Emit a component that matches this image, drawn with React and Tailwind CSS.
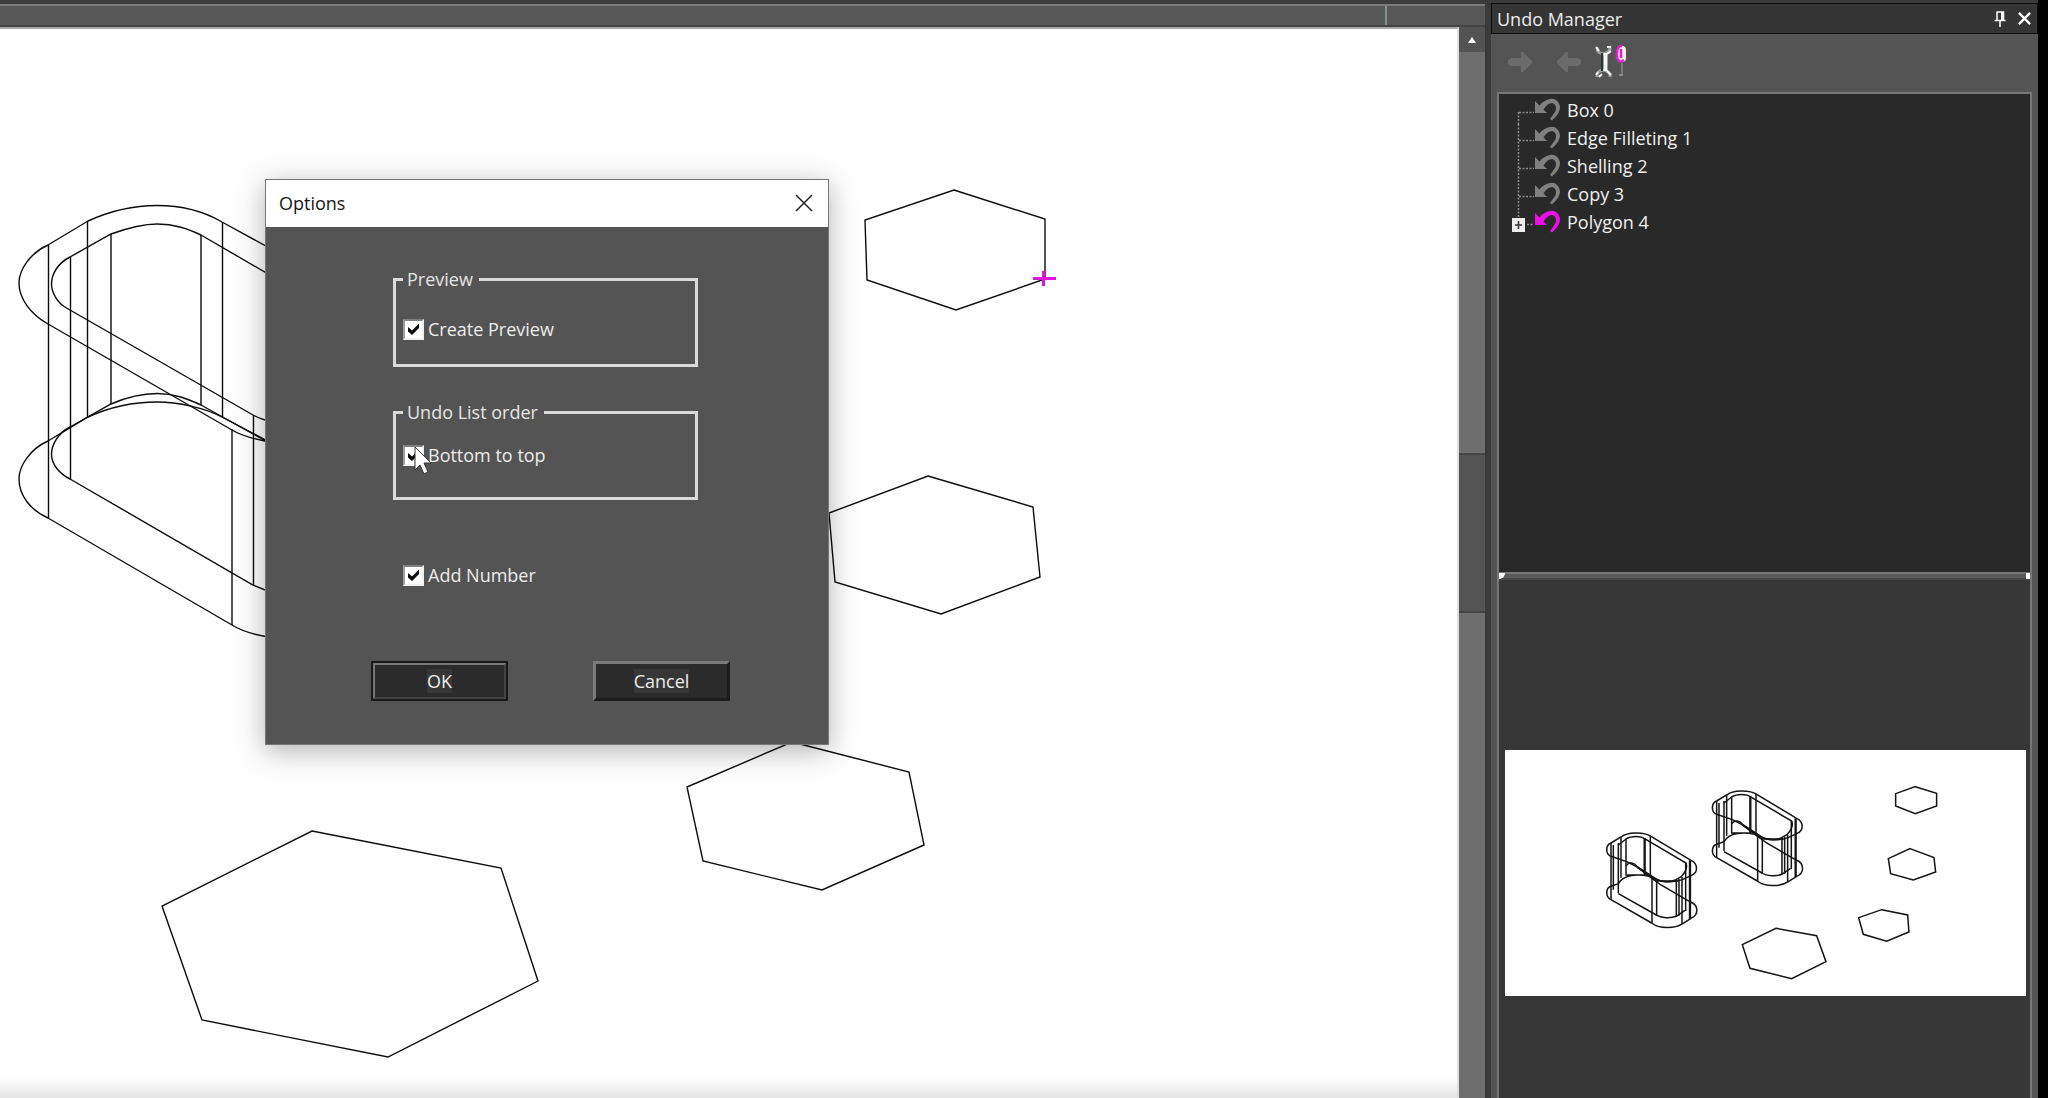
import React from "react";

const hexagons = [
  "954,190 1045,219 1045,279 956,310 867,280 865,220",
  "928,476 1033,507 1040,577 941,614 835,582 829,513",
  "792,742 909,772 924,845 822,890 703,861 687,787",
  "312,831 501,868 538,981 388,1057 202,1020 162,906",
];

const previewHexagons = [
  "1006,77 1070,97 1070,135 1006,158 947,135 947,98",
  "990,263 1062,290 1067,333 1000,357 932,338 925,293",
  "905,446 983,462 987,513 920,541 850,520 836,470",
  "588,502 710,524 738,602 635,653 510,622 487,551",
];

const undoSteps = ["Box 0", "Edge Filleting 1", "Shelling 2", "Copy 3", "Polygon 4"];

function Drawing() {
  return (
    <svg className="block h-full w-full" fill="none" stroke="#0c0c0c" strokeWidth="1.4" aria-hidden="true">
      <g transform="translate(0 -29)">
        <path d="M275 251 L222 222 C200 209 178 205.500 157 205.500 C133 205.500 110 211 88 221 L48 245 C30 253 19 270 19 283 C19 298 30 314 48 324 L232 430 Q245 438 275 443" />
        <path d="M275 278 L201 235 C188 229 175 224 157 224 C140 224 125 229 111 234 L70 257 C58 263 51.500 274 51.500 284 C51.500 293 58 303 65 307 L70 310 L253 415 Q260 419 275 423" />
        <path d="M275 445 L222 417 C205 408 178 402 157 402 C133 402 110 407 88 417 L48 441 C30 449 19 466 19 479 C19 495 30 510 48 518 L232 625 Q246 634 275 638" />
        <path d="M275 446 L201 405 C188 399 175 393.500 157 393.500 C140 393.500 125 398 111 404 L70 427 C58 433 51.500 445 51.500 454 C51.500 465 60 474 70 479 L253 585 L275 594" />
        <path d="M48.500 245V518 M70.500 257V479 M87.500 221V417 M111 234V404 M201 235V405 M222.500 222V417 M232 429V625 M253.500 415V585" />
        {hexagons.map((points) => (
          <polygon key={points} points={points} />
        ))}
        <path d="M1033 278.500H1056 M1043.500 271V286" stroke="#e015e0" strokeWidth="3" />
      </g>
    </svg>
  );
}

function PreviewSolid() {
  return (
    <>
      <path d="M50 60 L80 42 C98 26 150 26 170 40 L290 112 C312 122 312 150 290 158 L264 170 C240 180 200 178 175 164 L125 130 L97 116 L50 100 C33 94 33 66 50 60Z" />
      <path d="M72 66 L95 48 C110 38 140 38 152 48 L275 120 C280 132 275 146 262 160 L245 170 C225 180 200 178 185 168 L130 132 C118 118 105 116 95 128" />
      <path d="M50 190 C33 196 33 222 50 230 L172 300 C195 318 240 318 264 303 L290 286 C315 276 312 246 290 238 L200 186 L130 134" />
      <path d="M50 190 L72 182 C88 154 130 152 165 160 L185 174 H250 M72 212 L186 276 C200 286 230 286 246 280 L272 262 M96 156H145" />
      <path d="M50 60V230 M57 66V200 M72 60V210 M80 42V164 M95 48V158 M168 38V160 M173 164V300 M187 172V278 M246 170V280 M254 168V278 M263 162V303 M274 120V264" />
      <path d="M151 46V158 M287 112V288" strokeWidth="7" />
    </>
  );
}

function PreviewDrawing() {
  return (
    <svg
      className="block w-full bg-[#fefefe]"
      viewBox="1505 749 521 246"
      fill="none"
      stroke="#141414"
      strokeWidth="4.500"
      role="img"
      aria-label="Preview of the selected step"
    >
      <g transform="translate(1580 760) scale(0.3333)">
        <g transform="translate(360 60)">
          <PreviewSolid />
        </g>
        <g transform="translate(43 186)">
          <PreviewSolid />
        </g>
        {previewHexagons.map((points) => (
          <polygon key={points} points={points} />
        ))}
      </g>
    </svg>
  );
}

function CheckOption({ id, children }) {
  return (
    <label htmlFor={id} className="flex h-6 items-center gap-1 text-[18px] leading-6 text-[#ececec]">
      <span className="grid size-[21px]">
        <input
          id={id}
          type="checkbox"
          defaultChecked
          className="peer size-[21px] appearance-none border-2 border-t-[#808080] border-r-[#f0f0f0] border-b-[#f0f0f0] border-l-[#a0a0a0] bg-white [grid-area:1/1]"
        />
        <svg viewBox="0 0 21 21" className="pointer-events-none invisible size-[21px] [grid-area:1/1] peer-checked:visible" aria-hidden="true">
          <path d="M5 8 L9 11.500 L16 4.500 V9 L9 16 L5 12.500Z" fill="#0a0a0a" />
        </svg>
      </span>
      {children}
    </label>
  );
}

function Group({ title, className, children }) {
  return (
    <fieldset className={`ml-[127px] w-[305px] border-[3px] border-[#dadada] pl-[7px] ${className}`}>
      <legend className="pr-1.5 pl-1 text-[18px] leading-6 text-[#e4e4e4]">{title}</legend>
      {children}
    </fieldset>
  );
}

function OptionsDialog() {
  return (
    <section
      role="dialog"
      aria-label="Options"
      className="absolute top-[150px] left-[265px] w-[564px] border border-[#777] bg-[#545454] pb-[43px] shadow-[0_6px_26px_rgba(0,0,0,0.3)]"
    >
      <header className="flex h-[47px] items-center justify-between bg-white pr-[15px] pb-0.5 pl-[13px]">
        <h2 className="text-[18px] leading-6 text-[#161616]">Options</h2>
        <button type="button" aria-label="Close" className="size-[18px]">
          <svg viewBox="0 0 18 18" className="size-[18px]" stroke="#222" strokeWidth="1.500" aria-hidden="true">
            <path d="M1 1 L17 17 M17 1 L1 17" />
          </svg>
        </button>
      </header>
      <Group title="Preview" className="mt-10 pt-[26px] pb-[23px]">
        <CheckOption id="create-preview">Create Preview</CheckOption>
      </Group>
      <Group title="Undo List order" className="mt-[33px] pt-[19px] pb-[30px]">
        <CheckOption id="bottom-to-top">Bottom to top</CheckOption>
      </Group>
      <div className="mt-[63px] ml-[137px]">
        <CheckOption id="add-number">Add Number</CheckOption>
      </div>
      <div className="mt-[74px] ml-[105px] flex gap-[85px]">
        <button type="button" className="h-10 w-[137px] border-2 border-[#181818] bg-[#2b2b2b] text-[18px] leading-6 text-[#ececec]">
          <span className="flex h-full items-center justify-center border-2 border-t-[#777] border-r-[#444] border-b-[#444] border-l-[#777]">
            <span className="bg-[#373737]">OK</span>
          </span>
        </button>
        <button type="button" className="h-10 w-[137px] border-[3px] border-t-[#7a7a7a] border-r-[#1c1c1c] border-b-[#1c1c1c] border-l-[#7a7a7a] bg-[#2b2b2b] text-[18px] leading-6 text-[#ececec]">
          <span className="bg-[#373737]">Cancel</span>
        </button>
      </div>
      <svg viewBox="0 0 20 30" className="pointer-events-none absolute top-[266px] left-[148px] h-[30px] w-5" aria-hidden="true">
        <path d="M1 1 V24 L6 19 L10 28 L14 26 L10 17 H17Z" fill="#fff" stroke="#333" strokeWidth="1" />
      </svg>
    </section>
  );
}

function Viewport() {
  return (
    <main className="flex min-w-0 flex-1 flex-col bg-[#3c3c3c] pt-1">
      <div className="flex h-[23px] border-t-2 border-b-2 border-t-[#7b7b7b] border-b-[#454545] bg-[#575757]">
        <span className="ml-auto w-[100px] border-l-2 border-[#84908a]" />
      </div>
      <div className="flex min-h-0 flex-1">
        <div className="relative min-w-0 flex-1 border-t-2 border-r-2 border-t-[#a8a8a8] border-r-[#e0e0e0] bg-[#fefefe]">
          <div className="h-full overflow-hidden">
            <Drawing />
          </div>
          <div className="absolute inset-x-0 bottom-0 h-5 bg-linear-to-b from-transparent to-black/10" />
          <OptionsDialog />
        </div>
        <div className="flex w-[26px] flex-col bg-[#6e6e6e]">
          <button type="button" aria-label="Scroll up" className="flex h-[25px] items-center justify-center bg-[#535353]">
            <svg viewBox="0 0 8 6" className="h-1.5 w-2" aria-hidden="true">
              <path d="M4 0 L8 6 H0Z" fill="#fff" />
            </svg>
          </button>
          <div className="h-[401px]" />
          <div className="h-[160px] border-y-2 border-[#454545] bg-[#545454]" />
        </div>
      </div>
    </main>
  );
}

function UndoIcon({ color }) {
  return (
    <svg viewBox="0 0 26 24" className="h-6 w-[26px]" aria-hidden="true">
      <path d="M1 3 V15 H13 L9.500 11.500 C12 7.500 15 5 18 5 C22 6 23 10 21 14 L16 21 L18 22.500 C23 18 26 14 26 9 C25 3 21 0 16 1 C12 1.500 8 4 5.500 7.500Z" fill={color} />
    </svg>
  );
}

function ArrowIcon({ className }) {
  return (
    <svg viewBox="0 0 25 22" className={`h-[22px] w-[25px] ${className}`} aria-hidden="true">
      <path d="M3 7 H13 V1 H15 L24 10 V12 L15 21 H13 V15 H3 L0 13 V9Z" fill="#6b6b6b" />
    </svg>
  );
}

function UndoManager() {
  return (
    <aside className="flex w-[547px] shrink-0 flex-col bg-[#545454]">
      <header className="flex h-[31px] items-center border border-[#0d0d0d] bg-[#353535] pr-1.5 pl-[5px]">
        <h1 className="text-[18px] leading-6 text-[#ececec]">Undo Manager</h1>
        <button type="button" aria-label="Pin panel" className="ml-auto h-4 w-3">
          <svg viewBox="0 0 12 16" className="h-4 w-3" aria-hidden="true">
            <path d="M2.500 1 H9.500 V9 M3 1 V9 M0.500 9.500 H11.500 M6 10 V16" fill="none" stroke="#fff" strokeWidth="1.500" />
            <path d="M7 1 H10 V9 H7Z" fill="#fff" />
          </svg>
        </button>
        <button type="button" aria-label="Close panel" className="ml-3 size-[13px]">
          <svg viewBox="0 0 14 14" className="size-[13px]" stroke="#fff" strokeWidth="2.500" aria-hidden="true">
            <path d="M1 1 L13 13 M13 1 L1 13" />
          </svg>
        </button>
      </header>
      <div className="flex h-[58px] items-center pb-0.5 pl-[17px]">
        <button type="button" aria-label="Redo">
          <ArrowIcon className="block" />
        </button>
        <button type="button" aria-label="Undo" className="ml-[23px]">
          <ArrowIcon className="block rotate-180" />
        </button>
        <button type="button" aria-label="Options" className="ml-[13px]">
          <svg viewBox="0 0 33 36" className="block h-9 w-[33px]" fill="none" aria-hidden="true">
            <path d="M3 3 C3 8 5 9 9 10 C14 9 17 7 16 2 M3 33 C3 28 5 27 9 26 C14 27 17 29 16 33" stroke="#9aa3a0" strokeWidth="3" />
            <path d="M8 9 V27" stroke="#2f3331" strokeWidth="2" />
            <path d="M11.500 9 V27" stroke="#f6f6f6" strokeWidth="4" />
            <path d="M2 3 L5 7 M13 3 L17 3 M13 10 L17 7 M4 28 L2 31 M13 27 L17 31 M5 33 L8 30" stroke="#f6f6f6" strokeWidth="2" />
            <rect x="23" y="2" width="9" height="16" rx="4" fill="#f6ece6" />
            <path d="M28 2 C24 2 23 5 23 9 V14 L26 18 L30 16 M27 5 V14" stroke="#df1fd0" strokeWidth="2.500" />
            <path d="M28 19 V31" stroke="#7d7d7d" strokeWidth="2" />
            <path d="M25 31 H29" stroke="#8b8b8b" strokeWidth="2" />
          </svg>
        </button>
      </div>
      <div className="mx-1.5 flex flex-1 flex-col border-x-2 border-t-2 border-[#777]">
        <ul className="h-[478px] bg-[#292929] pt-0.5">
          {undoSteps.map((step, index) => {
            const current = index === undoSteps.length - 1;
            return (
              <li key={step} className="flex h-7 items-center pl-3 text-[18px] leading-6 text-[#f0f0f0]">
                <svg viewBox="0 0 23 28" className="h-7 w-[23px]" aria-hidden="true">
                  <path
                    d={index === 0 ? "M7.500 16V28 M8 16.500H23" : "M7.500 0V28 M8 16.500H23"}
                    className={current ? "hidden" : ""}
                    stroke="#8c8c8c"
                    strokeWidth="1.500"
                    strokeDasharray="2 1.500"
                  />
                  {current && (
                    <>
                      <path d="M7.500 0V10 M16 16.500H23" stroke="#8c8c8c" strokeWidth="1.500" strokeDasharray="2 1.500" />
                      <rect x="1" y="10" width="13" height="14" fill="#eee" />
                      <path d="M4 17H11 M7.500 13V21" stroke="#333" strokeWidth="1.500" />
                    </>
                  )}
                </svg>
                <UndoIcon color={current ? "#ea0fe6" : "#808080"} />
                <span className="ml-[7px]">{step}</span>
              </li>
            );
          })}
        </ul>
        <div className="flex h-2 items-center justify-between border-t-2 border-b-2 border-t-[#777] border-b-[#484848] bg-[#5a5a5a]">
          <span className="h-1.5 w-1.5 rounded-br-full bg-white" />
          <span className="h-1.5 w-1 bg-white" />
        </div>
        <div className="flex-1 bg-[#373737] pt-[170px] pr-1 pl-1.5">
          <PreviewDrawing />
        </div>
      </div>
    </aside>
  );
}

export default function App() {
  return (
    <div className="flex h-screen overflow-hidden bg-[#3c3c3c] font-['Open_Sans','Noto_Sans',sans-serif]">
      <Viewport />
      <div className="flex border-r-10 border-black">
        <div className="w-1.5 bg-[#3a3a3a]" />
        <div className="flex bg-[#3a3a3a] pt-[3px]">
          <UndoManager />
        </div>
      </div>
    </div>
  );
}
